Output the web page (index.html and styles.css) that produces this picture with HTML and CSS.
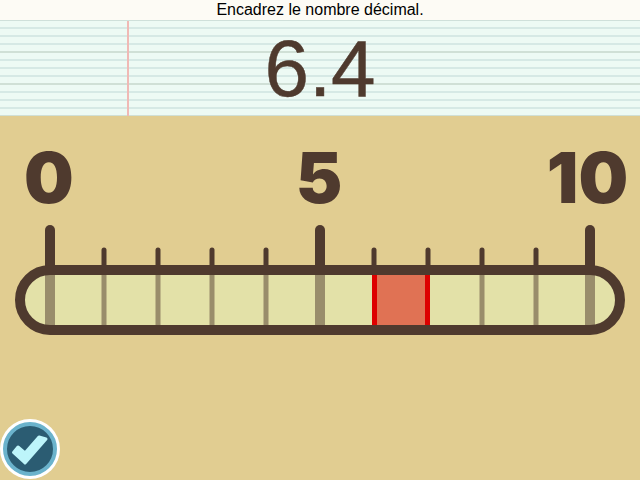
FILE: index.html
```html
<!DOCTYPE html>
<html lang="fr">
<head>
    <meta charset="UTF-8">
    <title>Encadrez le nombre décimal</title>
    <link rel="stylesheet" href="styles.css">
</head>
<body>
    <header class="instruction">Encadrez le nombre décimal.</header>
    <section class="paper">
        <div class="margin-line"></div>
        <div class="target">6.4</div>
    </section>
    <main class="board">
        <svg class="scale" width="640" height="365" viewBox="0 115 640 365">
            <text class="label" x="49" y="202.5">0</text>
            <text class="label" x="319" y="202.5">5</text>
            <text class="label" x="587.5" y="202.5">10</text>

            <rect class="bar-fill" x="20" y="270" width="600" height="60" rx="30"/>
            <rect class="selected" x="374" y="275" width="54" height="50"/>

            <g class="ticks-major">
                <line x1="50" y1="230" x2="50" y2="270"/>
                <line x1="320" y1="230" x2="320" y2="270"/>
                <line x1="590" y1="230" x2="590" y2="270"/>
            </g>
            <g class="ticks-minor">
                <line x1="104" y1="250" x2="104" y2="270"/>
                <line x1="158" y1="250" x2="158" y2="270"/>
                <line x1="212" y1="250" x2="212" y2="270"/>
                <line x1="266" y1="250" x2="266" y2="270"/>
                <line x1="374" y1="250" x2="374" y2="270"/>
                <line x1="428" y1="250" x2="428" y2="270"/>
                <line x1="482" y1="250" x2="482" y2="270"/>
                <line x1="536" y1="250" x2="536" y2="270"/>
            </g>
            <g class="inner-major">
                <line x1="50" y1="275" x2="50" y2="325"/>
                <line x1="320" y1="275" x2="320" y2="325"/>
                <line x1="590" y1="275" x2="590" y2="325"/>
            </g>
            <g class="inner-minor">
                <line x1="104" y1="275" x2="104" y2="325"/>
                <line x1="158" y1="275" x2="158" y2="325"/>
                <line x1="212" y1="275" x2="212" y2="325"/>
                <line x1="266" y1="275" x2="266" y2="325"/>
                <line x1="482" y1="275" x2="482" y2="325"/>
                <line x1="536" y1="275" x2="536" y2="325"/>
            </g>
            <g class="inner-selected">
                <line x1="374.5" y1="275" x2="374.5" y2="325"/>
                <line x1="427.5" y1="275" x2="427.5" y2="325"/>
            </g>
            <rect class="bar-outline" x="20" y="270" width="600" height="60" rx="30"/>
        </svg>
        <button class="check-btn" type="button" aria-label="Valider">
            <svg width="60" height="60" viewBox="0 0 60 60">
                <circle class="check-ring" cx="30" cy="30" r="25"/>
                <path class="check-mark" d="M13.5 33.5 L18 28 L25 34 L39 18 L46 20 L25 44 Z"/>
            </svg>
        </button>
    </main>
</body>
</html>
```

FILE: styles.css
```css
:root {
    --brown: #4f3a2e;
    --sand: #e1cd91;
    --bar: #e3e1a8;
}
* {
    margin: 0;
    padding: 0;
    box-sizing: border-box;
}

body {
    width: 640px;
    height: 480px;
    overflow: hidden;
    background-color: var(--sand);
    font-family: "Liberation Sans", Arial, sans-serif;
}

.instruction {
    height: 20px;
    line-height: 20px;
    text-align: center;
    font-size: 16px;
    color: #000000;
    background-color: #fdfbf5;
}

.paper {
    position: relative;
    height: 96px;
    border-top: 1px solid #cfe0da;
    background-color: #edfaf4;
    background-image:
        repeating-linear-gradient(to bottom, transparent 0, transparent 30px, #d0e0d6 30px, #d0e0d6 32px),
        repeating-linear-gradient(to bottom, transparent 0, transparent 6px, #d6e9e5 6px, #d6e9e5 8px);
}
.margin-line {
    position: absolute;
    top: 0;
    bottom: 0;
    left: 127px;
    width: 2px;
    background-color: #f0b9b5;
}
.target {
    text-align: center;
    font-size: 80px;
    line-height: 96px;
    color: var(--brown);
    -webkit-text-stroke: 0.5px var(--brown);
}

.board {
    position: relative;
    height: 364px;
}
.scale {
    display: block;
    margin-top: -1px;
}
.label {
    font-family: "Inter", sans-serif;
    font-weight: 900;
    font-size: 70px;
    text-anchor: middle;
    fill: var(--brown);
}
.bar-fill {
    fill: var(--bar);
}
.bar-outline {
    fill: none;
    stroke: var(--brown);
    stroke-width: 10;
}
.selected {
    fill: #e07254;
}
.ticks-major line,
.ticks-minor line {
    stroke: var(--brown);
    stroke-linecap: round;
}
.ticks-major line {
    stroke-width: 10;
}
.ticks-minor line {
    stroke-width: 5;
}
.inner-major line,
.inner-minor line {
    stroke: var(--brown);
    stroke-opacity: 0.5;
}
.inner-major line {
    stroke-width: 10;
}
.inner-minor line {
    stroke-width: 5;
}
.inner-selected line {
    stroke: #dd0000;
    stroke-width: 5;
}

.check-btn {
    position: absolute;
    left: 0;
    bottom: 0;
    width: 60px;
    height: 60px;
    border: 0;
    border-radius: 50%;
    background-color: #ffffff;
}
.check-btn svg {
    display: block;
}
.check-ring {
    fill: #2b5c72;
    stroke: #6bb3cc;
    stroke-width: 4;
}
.check-mark {
    fill: #bdf5fa;
    stroke: #bdf5fa;
    stroke-width: 3;
    stroke-linejoin: round;
}
```
